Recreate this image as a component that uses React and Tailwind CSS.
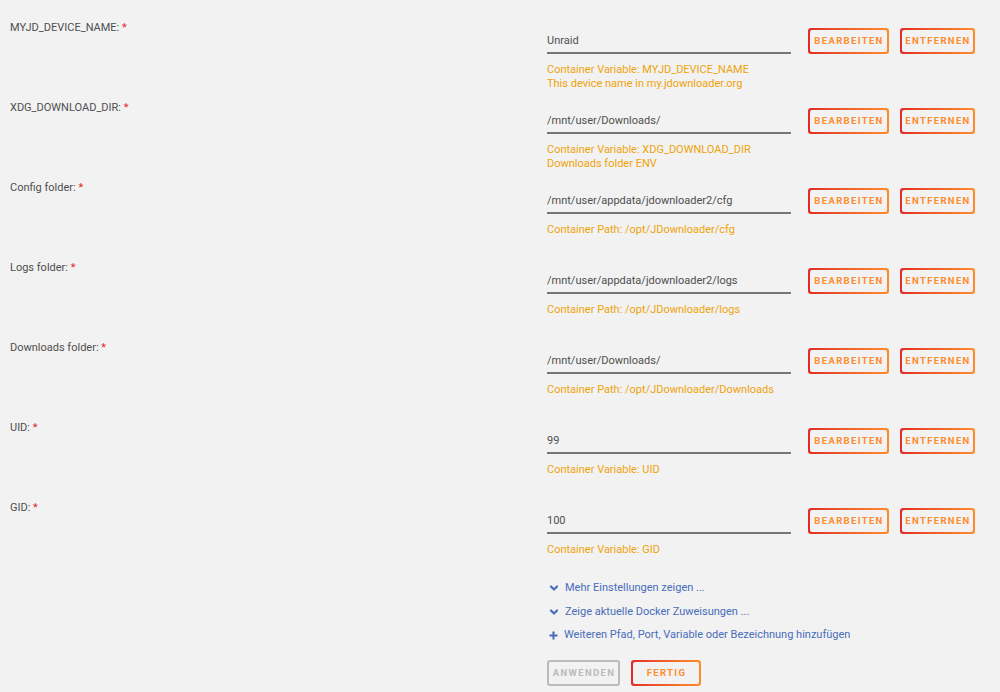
import { ChevronDown, Plus } from 'lucide-react';

const rows = [
  { label: 'MYJD_DEVICE_NAME:', value: 'Unraid', desc: ['Container Variable: MYJD_DEVICE_NAME', 'This device name in my.jdownloader.org'] },
  { label: 'XDG_DOWNLOAD_DIR:', value: '/mnt/user/Downloads/', desc: ['Container Variable: XDG_DOWNLOAD_DIR', 'Downloads folder ENV'] },
  { label: 'Config folder:', value: '/mnt/user/appdata/jdownloader2/cfg', desc: ['Container Path: /opt/JDownloader/cfg'] },
  { label: 'Logs folder:', value: '/mnt/user/appdata/jdownloader2/logs', desc: ['Container Path: /opt/JDownloader/logs'] },
  { label: 'Downloads folder:', value: '/mnt/user/Downloads/', desc: ['Container Path: /opt/JDownloader/Downloads'] },
  { label: 'UID:', value: '99', desc: ['Container Variable: UID'] },
  { label: 'GID:', value: '100', desc: ['Container Variable: GID'] },
];

function GradButton({ children, width }) {
  return (
    <div className={`rounded-[3px] bg-gradient-to-r from-[#e22828] to-[#ff8c2f] p-[2px] ${width}`}>
      <div className="flex h-[22px] items-center justify-center rounded-[2px] bg-[#f2f2f2] pl-[1px] text-[9.5px] font-bold tracking-[1.35px] text-[#ff8c2f]">
        {children}
      </div>
    </div>
  );
}

export default function App() {
  return (
    <div className="min-h-[692px] w-[1000px] bg-[#f2f2f2] pt-[21px] font-['Roboto',sans-serif] text-[#4f4f4f]">
      {rows.map((r) => (
        <div key={r.label} className="flex h-[80px]">
          <div className="w-[547px] pl-[10px] text-[11px] leading-[14px]">
            {r.label} <span className="text-[#e22828]">*</span>
          </div>
          <div className="-mt-[1px] flex flex-col">
            <div className="mt-[8px] flex items-center">
              <div className="flex h-[25px] w-[244px] items-center border-b-2 border-[#777] pt-[2px] text-[11px]">
                {r.value}
              </div>
              <div className="ml-[17px] flex gap-[11px]">
                <GradButton width="w-[81px]">BEARBEITEN</GradButton>
                <GradButton width="w-[75px]">ENTFERNEN</GradButton>
              </div>
            </div>
            <div className="mt-[9px] text-[11px] leading-[14px] text-[#f0a30a]">
              {r.desc.map((d) => (
                <div key={d}>{d}</div>
              ))}
            </div>
          </div>
        </div>
      ))}
      <div className="ml-[548px] flex flex-col gap-[9.5px] text-[11px] leading-[14px] text-[#486dba]">
        <div className="flex items-center gap-[5px]">
          <ChevronDown size={12} strokeWidth={4.5} />
          <span>Mehr Einstellungen zeigen ...</span>
        </div>
        <div className="flex items-center gap-[5px]">
          <ChevronDown size={12} strokeWidth={4.5} />
          <span>Zeige aktuelle Docker Zuweisungen ...</span>
        </div>
        <div className="flex items-center gap-[5px]">
          <Plus size={11} strokeWidth={4.5} />
          <span>Weiteren Pfad, Port, Variable oder Bezeichnung hinzufügen</span>
        </div>
      </div>
      <div className="ml-[547px] mt-[18px] flex gap-[11px]">
        <div className="flex h-[26px] w-[73px] items-center justify-center rounded-[3px] border-2 border-[#bbb] pl-[1px] text-[9.5px] font-bold tracking-[1.35px] text-[#bbb]">
          ANWENDEN
        </div>
        <GradButton width="w-[70px]">FERTIG</GradButton>
      </div>
    </div>
  );
}
